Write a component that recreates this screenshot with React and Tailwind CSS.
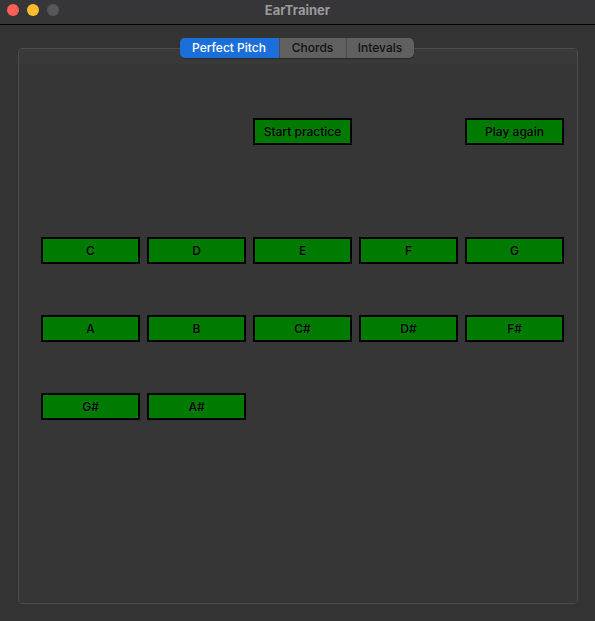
import React, { useState } from 'react';

const tabs = ['Perfect Pitch', 'Chords', 'Intevals'];
const notes = ['C', 'D', 'E', 'F', 'G', 'A', 'B', 'C#', 'D#', 'F#', 'G#', 'A#'];

function NoteButton({ label, onClick }) {
  return (
    <button
      onClick={onClick}
      className="h-[27px] bg-[#017a01] border-2 border-black text-[12px] font-medium text-black leading-none"
    >
      {label}
    </button>
  );
}

export default function App() {
  const [tab, setTab] = useState(0);

  return (
    <div
      className="w-[595px] h-[621px] bg-[#333333] flex flex-col overflow-hidden"
      style={{ fontFamily: 'Inter, "Liberation Sans", Arial, sans-serif' }}
    >
      {/* title bar */}
      <div className="h-[25px] shrink-0 relative bg-[#363537] border-b border-black flex items-start pt-[4px]">
        <div className="flex gap-[8px] pl-[7px]">
          <span className="w-[12px] h-[12px] rounded-full bg-[#fe5f57]"></span>
          <span className="w-[12px] h-[12px] rounded-full bg-[#febc2e]"></span>
          <span className="w-[12px] h-[12px] rounded-full bg-[#58575a]"></span>
        </div>
        <div className="absolute inset-x-0 top-0 h-[21px] flex items-center justify-center text-[13px] font-bold text-[#9b9b9b]">
          EarTrainer
        </div>
      </div>

      <div className="flex-1 pl-[18px] pr-[17px] pt-[23px] pb-[17px]">
        <div className="relative h-full border border-[#4c4c4c] rounded-[4px] flex flex-col">
          {/* segmented tabs */}
          <div className="absolute -top-[11px] left-0 right-0 flex justify-center">
            <div className="flex h-[20px] mr-[3px] rounded-[5px] overflow-hidden bg-[#606060] shadow-[0_1px_1px_rgba(0,0,0,0.3)]">
              {tabs.map((t, i) => (
                <button
                  key={t}
                  onClick={() => setTab(i)}
                  className={`text-[12px] font-medium leading-none ${i === 0 ? 'w-[99px]' : i === 1 ? 'w-[67px] border-l border-[#4e4e4e]' : 'w-[68px] border-l border-[#4e4e4e]'} ${tab === i ? 'bg-[#1c6fd8] text-white' : 'text-[#111111]'}`}
                >
                  {t}
                </button>
              ))}
            </div>
          </div>

          <div className="h-[15px] shrink-0 bg-[#393939] rounded-t-[4px]"></div>

          <div className="flex-1 bg-[#363636] pl-[22px] pr-[13px] pt-[54px]">
            <div className="grid grid-cols-5 gap-x-[7px]">
              <div></div>
              <div></div>
              <NoteButton label="Start practice" />
              <div></div>
              <NoteButton label="Play again" />
            </div>

            <div className="grid grid-cols-5 gap-x-[7px] gap-y-[51px] mt-[92px]">
              {notes.map((n) => (
                <NoteButton key={n} label={n} />
              ))}
            </div>
          </div>
        </div>
      </div>
    </div>
  );
}
